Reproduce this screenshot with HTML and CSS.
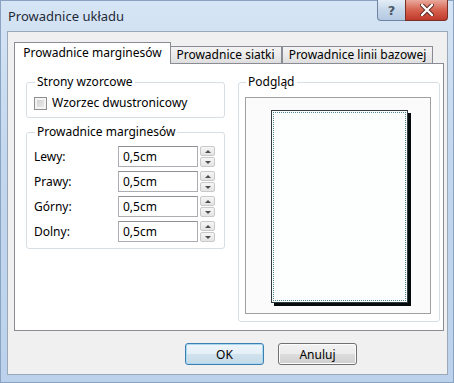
FILE: index.html
```html
<!DOCTYPE html>
<html lang="pl">
<head>
  <meta charset="UTF-8">
  <title>Prowadnice układu</title>
  <link rel="stylesheet" href="styles.css">
</head>
<body>
  <div class="window">
    <div class="titlebar">
      <span class="title">Prowadnice układu</span>
      <div class="caption-btns">
        <span class="cap-btn help">?</span>
        <span class="cap-btn close">
          <svg width="14" height="12" viewBox="0 0 14 12">
            <path d="M2 1 L12 11 M12 1 L2 11" stroke="#5a2a24" stroke-width="4.2" stroke-linecap="round"/>
            <path d="M2 1 L12 11 M12 1 L2 11" stroke="#ffffff" stroke-width="2.4" stroke-linecap="round"/>
          </svg>
        </span>
      </div>
    </div>

    <div class="client">
      <div class="tabs">
        <div class="tab active">Prowadnice marginesów</div>
        <div class="tab t2">Prowadnice siatki</div>
        <div class="tab t3">Prowadnice linii bazowej</div>
      </div>

      <div class="panel">
        <div class="col-left">
          <fieldset class="group pages">
            <legend>Strony wzorcowe</legend>
            <label class="check"><span class="box"></span>Wzorzec dwustronicowy</label>
          </fieldset>

          <fieldset class="group margins">
            <legend>Prowadnice marginesów</legend>
            <div class="row">
              <span class="lbl">Lewy:</span>
              <span class="input">0,5cm</span>
              <span class="spin"><span class="up"></span><span class="down"></span></span>
            </div>
            <div class="row">
              <span class="lbl">Prawy:</span>
              <span class="input">0,5cm</span>
              <span class="spin"><span class="up"></span><span class="down"></span></span>
            </div>
            <div class="row">
              <span class="lbl">Górny:</span>
              <span class="input">0,5cm</span>
              <span class="spin"><span class="up"></span><span class="down"></span></span>
            </div>
            <div class="row">
              <span class="lbl">Dolny:</span>
              <span class="input">0,5cm</span>
              <span class="spin"><span class="up"></span><span class="down"></span></span>
            </div>
          </fieldset>
        </div>

        <fieldset class="group preview">
          <legend>Podgląd</legend>
          <div class="preview-box">
            <div class="page"></div>
          </div>
        </fieldset>
      </div>

      <div class="actions">
        <button class="btn default">OK</button>
        <button class="btn">Anuluj</button>
      </div>
    </div>
  </div>
</body>
</html>
```

FILE: styles.css
```css
/* Okno dialogowe */
body {
  margin: 0;
  overflow: hidden;
  font-family: "Noto Sans", "Open Sans", sans-serif;
  font-size: 12px;
  color: #000;
}

.window {
  width: 454px;
  height: 383px;
  box-sizing: border-box;
  background: linear-gradient(#d6e5f5, #c3d7ee 40%, #bcd2ec);
  box-shadow: inset 0 0 0 1px #8aa3c0;
  display: flex;
  flex-direction: column;
}

.titlebar {
  height: 31px;
  display: flex;
  align-items: flex-start;
  padding: 0 6px 0 8px;
}

.title {
  padding-top: 7px;
  font-size: 13px;
  color: #1e2a38;
}

.caption-btns {
  margin-left: auto;
  display: flex;
}

.cap-btn {
  height: 21px;
  display: flex;
  align-items: center;
  justify-content: center;
  box-sizing: border-box;
  border: 1px solid #6d85a3;
  border-top: none;
}

.help {
  width: 29px;
  border-radius: 0 0 0 4px;
  background: linear-gradient(#e3edf7, #c6d7ea 50%, #b4c9e1);
  color: #4a5866;
  font-weight: bold;
  font-size: 13px;
  font-family: "DejaVu Sans", sans-serif;
}

.close {
  width: 43px;
  margin-left: -1px;
  border-color: #7a2e26;
  border-radius: 0 0 4px 0;
  background: linear-gradient(#e9a99d, #d6624f 50%, #c0392b);
}

.client {
  margin: 0 6px 8px 7px;
  flex: 1;
  background-color: #f0f0f0;
  border: 1px solid #9aa8b8;
  padding: 10px 0 0 6px;
}

/* Onglets */
.tabs {
  display: flex;
  align-items: flex-end;
  height: 21px;
}

.tab {
  box-sizing: border-box;
  height: 17px;
  line-height: 15px;
  text-align: center;
  border: 1px solid #898c95;
  border-bottom: none;
  background: linear-gradient(#f3f3f3, #ebebeb 50%, #dedede);
}

.tab.active {
  width: 157px;
  height: 22px;
  line-height: 20px;
  background: #fff;
  position: relative;
  z-index: 1;
  margin-bottom: -1px;
  border-bottom: none;
}

.tab.t2 {
  width: 112px;
  margin-left: -1px;
  border-left: none;
}

.tab.t3 {
  width: 151px;
}

.panel {
  box-sizing: border-box;
  width: 430px;
  height: 268px;
  border: 1px solid #898c95;
  background-color: #fff;
  padding: 10px 0 0 11px;
  display: flex;
  gap: 13px;
}

.col-left {
  width: 199px;
  display: flex;
  flex-direction: column;
  gap: 6px;
}

.group {
  margin: 0;
  border: 1px solid #d5dfe5;
  border-radius: 3px;
  padding: 0 8px;
  min-width: 0;
}

.group legend {
  padding: 0 2px;
  line-height: 16px;
}

.pages {
  height: 44px;
  box-sizing: border-box;
}

.check {
  display: flex;
  align-items: center;
  gap: 5px;
  margin-top: 5px;
  margin-left: -1px;
  line-height: 16px;
}

.box {
  width: 13px;
  height: 13px;
  box-sizing: border-box;
  border: 1px solid #8f8f8f;
  background: linear-gradient(135deg, #cbcbcb, #f0f0f0);
  box-shadow: inset 0 0 0 2px #f4f4f4;
}

.margins {
  height: 125px;
  box-sizing: border-box;
}

.row {
  display: flex;
  align-items: center;
  height: 21px;
  margin-top: 4px;
}

.row:first-of-type {
  margin-top: 6px;
}

.lbl {
  width: 84px;
  margin-left: -1px;
}

.input {
  box-sizing: border-box;
  width: 80px;
  height: 21px;
  line-height: 19px;
  border: 1px solid #abadb3;
  border-top-color: #8e8f94;
  padding-left: 4px;
  background: #fff;
}

.spin {
  margin-left: 2px;
  width: 15px;
  height: 21px;
  display: flex;
  flex-direction: column;
  gap: 1px;
}

.spin span {
  flex: 1;
  box-sizing: border-box;
  border: 1px solid #c9c9c9;
  border-radius: 2px;
  background: linear-gradient(#f6f6f6, #e4e4e4);
  display: flex;
  align-items: center;
  justify-content: center;
}

.spin .up::after {
  content: "";
  border-left: 3px solid transparent;
  border-right: 3px solid transparent;
  border-bottom: 3px solid #4d4d4d;
}

.spin .down::after {
  content: "";
  border-left: 3px solid transparent;
  border-right: 3px solid transparent;
  border-top: 3px solid #4d4d4d;
}

/* Podgląd */
.preview {
  width: 202px;
  height: 248px;
  box-sizing: border-box;
  padding: 0 7px;
}

.preview-box {
  box-sizing: border-box;
  width: 186px;
  height: 217px;
  margin-top: 7px;
  margin-left: -1px;
  border: 1px solid #a0a0a0;
  background-color: #fbfbfb;
  padding-top: 12px;
  display: flex;
  justify-content: center;
  align-items: flex-start;
}

.page {
  width: 137px;
  height: 193px;
  box-sizing: border-box;
  margin-left: 2px;
  border: 1px solid #2f3b40;
  background-color: #fdfefe;
  box-shadow: 3px 3px 0 #050a0c;
  outline: 1px dotted #4f8796;
  outline-offset: -3px;
}

/* Przyciski */
.actions {
  display: flex;
  gap: 14px;
  margin-top: 12px;
  padding-left: 171px;
}

.btn {
  width: 79px;
  height: 22px;
  font-family: "Noto Sans", "Open Sans", sans-serif;
  font-size: 12px;
  color: #000;
  border: 1px solid #707070;
  border-radius: 3px;
  background: linear-gradient(#f2f2f2, #ebebeb 50%, #dddddd 50%, #cfcfcf);
  box-shadow: inset 0 0 0 1px #fcfcfc;
  padding: 0;
}

.btn.default {
  border-color: #3c7fb1;
  background: linear-gradient(#eef6fb, #e4eff6 50%, #d2e3ee 50%, #c4dae8);
  box-shadow: inset 0 0 0 1px #a9d8f0;
}
```
